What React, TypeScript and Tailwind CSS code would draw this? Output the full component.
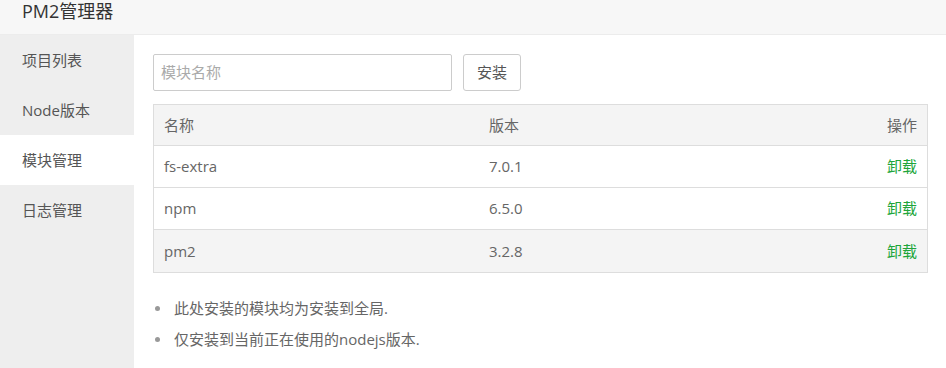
import React from "react";

const font = { fontFamily: '"Segoe UI", "Open Sans", "Noto Sans CJK SC", sans-serif' };

const rows = [
  { name: "fs-extra", ver: "7.0.1", bg: "bg-white" },
  { name: "npm", ver: "6.5.0", bg: "bg-white" },
  { name: "pm2", ver: "3.2.8", bg: "bg-[#f4f4f4]" },
];

export default function App() {
  return (
    <div className="w-[946px] h-[368px] bg-white overflow-hidden flex flex-col" style={font}>
      <div className="h-[35px] shrink-0 bg-[#f7f7f7] border-b border-[#ececec] pl-[22px] pt-[1px] text-[18px] leading-[20px] text-[#333]">
        PM2管理器
      </div>
      <div className="flex flex-1">
        <div className="w-[134px] shrink-0 bg-[#eeeeee] flex flex-col text-[15px] text-[#555]">
          <div className="h-[50px] flex items-center pl-[22px]">项目列表</div>
          <div className="h-[50px] flex items-center pl-[22px]">Node版本</div>
          <div className="h-[50px] flex items-center pl-[22px] bg-white">模块管理</div>
          <div className="h-[50px] flex items-center pl-[22px]">日志管理</div>
        </div>
        <div className="flex-1 pl-[19px] pt-[19px]">
          <div className="flex gap-[11px]">
            <div className="w-[299px] h-[37px] border border-[#ccc] rounded-[2px] flex items-center pl-[7px] text-[15px] text-[#aaa]">
              模块名称
            </div>
            <div className="w-[58px] h-[37px] border border-[#ccc] rounded-[3px] flex items-center justify-center text-[15px] text-[#555]">
              安装
            </div>
          </div>
          <div className="mt-[13px] w-[775px] border border-[#ddd] text-[15px] text-[#666]">
            <div className="h-[41px] flex items-center bg-[#f4f4f4] border-b border-[#ddd] px-[10px]">
              <div className="w-[325px]">名称</div>
              <div className="flex-1">版本</div>
              <div>操作</div>
            </div>
            {rows.map((r, i) => (
              <div
                key={r.name}
                className={`h-[42px] flex items-center px-[10px] ${r.bg} ${i < rows.length - 1 ? "border-b border-[#ddd]" : ""}`}
              >
                <div className="w-[325px]">{r.name}</div>
                <div className="flex-1">{r.ver}</div>
                <div className="text-[#20a53a]">卸载</div>
              </div>
            ))}
          </div>
          <ul className="mt-[25px] text-[15px] text-[#666] flex flex-col gap-[11px]">
            <li className="flex items-center h-[20px]">
              <span className="w-[5px] h-[5px] rounded-full bg-[#999] ml-[2px] mr-[14px]" />
              此处安装的模块均为安装到全局.
            </li>
            <li className="flex items-center h-[20px]">
              <span className="w-[5px] h-[5px] rounded-full bg-[#999] ml-[2px] mr-[14px]" />
              仅安装到当前正在使用的nodejs版本.
            </li>
          </ul>
        </div>
      </div>
    </div>
  );
}
